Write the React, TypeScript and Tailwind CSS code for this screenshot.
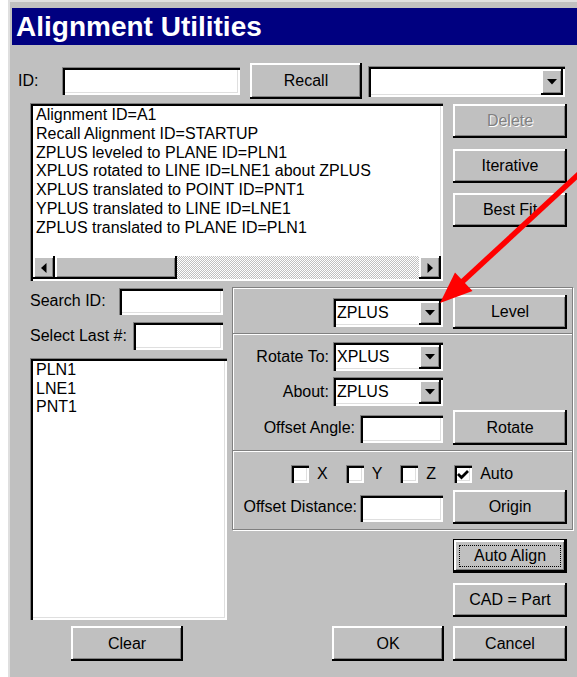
import React from "react";

// Win9x-style bevels
const RAISED =
  "bg-[#c0c0c0] shadow-[inset_-2px_-2px_0_#000,inset_2px_2px_0_#fff,inset_-3px_-3px_0_#808080]";
const SUNKEN =
  "bg-white shadow-[inset_1px_1px_0_#808080,inset_3px_3px_0_#000,inset_-2px_-2px_0_#fff,inset_-3px_-3px_0_#dfdfdf]";

function Btn({
  className = "",
  children,
  disabled = false,
}: {
  className?: string;
  children: React.ReactNode;
  disabled?: boolean;
}) {
  return (
    <div
      className={`flex shrink-0 items-center justify-center leading-none ${RAISED} ${className} ${
        disabled ? "text-[#808080] [text-shadow:1px_1px_0_#fff]" : "text-black"
      }`}
    >
      {children}
    </div>
  );
}

function DownArrow() {
  return (
    <svg width="10" height="6" viewBox="0 0 10 6">
      <path d="M0 0H10L5 5.5Z" fill="#000" />
    </svg>
  );
}

function Combo({ value = "", className = "" }: { value?: string; className?: string }) {
  return (
    <div className={`flex shrink-0 items-stretch pt-[3px] pl-[3px] pr-[2px] pb-[2px] ${SUNKEN} ${className}`}>
      <div className="flex flex-1 items-center pl-[1px] leading-none">{value}</div>
      <div className={`flex w-[22px] items-center justify-center ${RAISED}`}>
        <DownArrow />
      </div>
    </div>
  );
}

function Field({ className = "" }: { className?: string }) {
  return <div className={`shrink-0 ${SUNKEN} ${className}`} />;
}

function Check({ checked = false, label }: { checked?: boolean; label: string }) {
  return (
    <div className="flex items-center gap-[8px]">
      <div className={`flex h-[18px] w-[18px] items-center justify-center ${SUNKEN}`}>
        {checked && (
          <svg width="12" height="11" viewBox="0 0 12 11">
            <path d="M1 5L4.5 8.5L11 2" fill="none" stroke="#000" strokeWidth="2.8" />
          </svg>
        )}
      </div>
      <span className="leading-none">{label}</span>
    </div>
  );
}

function Divider() {
  return (
    <div className="flex flex-col">
      <div className="h-px bg-[#808080]" />
      <div className="h-px bg-white" />
    </div>
  );
}

const historyLines = [
  "Alignment ID=A1",
  "Recall Alignment ID=STARTUP",
  "ZPLUS leveled to PLANE ID=PLN1",
  "XPLUS rotated to LINE ID=LNE1 about ZPLUS",
  "XPLUS translated to POINT ID=PNT1",
  "YPLUS translated to LINE ID=LNE1",
  "ZPLUS translated to PLANE ID=PLN1",
];

const features = ["PLN1", "LNE1", "PNT1"];

export default function App() {
  return (
    <div className="relative flex h-[677px] w-[577px] overflow-hidden bg-white font-['Liberation_Sans',Arial,sans-serif] text-[16px] text-black">
      <div className="w-[8px] shrink-0 bg-white" />
      <div className="flex flex-1 flex-col border-l-2 border-t-2 border-[#dfdfdf] bg-[#c0c0c0] pt-[6px]">
        {/* title bar */}
        <div className="ml-[2px] flex h-[37px] items-center bg-[#000080] pl-[4px] text-[28px] font-bold leading-none text-white">
          Alignment Utilities
        </div>

        {/* ID / Recall row */}
        <div className="mt-[18px] flex h-[36px] items-center">
          <span className="ml-[8px] w-[44px] leading-none">ID:</span>
          <Field className="h-[28px] w-[178px]" />
          <Btn className="ml-[10px] h-[36px] w-[112px]">Recall</Btn>
          <Combo className="ml-[6px] h-[31px] w-[197px]" />
        </div>

        {/* history list + action buttons */}
        <div className="mt-[4px] flex">
          <div className={`ml-[20px] flex h-[178px] w-[413px] flex-col pt-[3px] pl-[3px] pr-[2px] pb-[2px] ${SUNKEN}`}>
            <div className="flex-1 overflow-hidden whitespace-nowrap pl-[3px] leading-[18.8px]">
              {historyLines.map((l) => (
                <div key={l}>{l}</div>
              ))}
            </div>
            <div className="flex h-[23px]">
              <div className={`flex w-[22px] items-center justify-center ${RAISED}`}>
                <svg width="6" height="10" viewBox="0 0 6 10">
                  <path d="M5.5 0V10L0 5Z" fill="#000" />
                </svg>
              </div>
              <div className={`w-[122px] ${RAISED}`} />
              <div className="flex-1 bg-[image:repeating-conic-gradient(#ffffff_0_25%,#c0c0c0_0_50%)] bg-[length:2px_2px]" />
              <div className={`flex w-[22px] items-center justify-center ${RAISED}`}>
                <svg width="6" height="10" viewBox="0 0 6 10">
                  <path d="M0.5 0V10L6 5Z" fill="#000" />
                </svg>
              </div>
            </div>
          </div>
          <div className="ml-[10px] flex w-[114px] flex-col pt-[1px]">
            <Btn disabled className="h-[34px] w-[114px]">
              Delete
            </Btn>
            <Btn className="mt-[11px] h-[34px] w-[114px]">Iterative</Btn>
            <Btn className="mt-[10px] h-[34px] w-[114px]">Best Fit</Btn>
          </div>
        </div>

        {/* lower area */}
        <div className="mt-[6px] flex">
          {/* feature search column */}
          <div className="ml-[20px] flex w-[197px] flex-col">
            <div className="flex h-[28px] items-center">
              <span className="leading-none">Search ID:</span>
              <Field className="ml-auto mr-[4px] mt-[1px] h-[27px] w-[104px]" />
            </div>
            <div className="mt-[7px] flex h-[28px] items-center">
              <span className="leading-none">Select Last #:</span>
              <Field className="ml-auto mr-[4px] h-[28px] w-[90px]" />
            </div>
            <div className={`mt-[8px] h-[262px] w-[197px] pt-[3px] pl-[6px] leading-[18.5px] ${SUNKEN}`}>
              {features.map((f) => (
                <div key={f}>{f}</div>
              ))}
            </div>
            <Btn className="ml-[41px] mt-[6px] h-[35px] w-[112px]">Clear</Btn>
          </div>

          {/* alignment controls column */}
          <div className="ml-[5px] flex w-[341px] flex-col">
            <div className="flex h-[243px] flex-col border border-[#808080] shadow-[inset_1px_1px_0_#fff,1px_1px_0_#fff]">
              {/* level */}
              <div className="flex h-[45px] items-start justify-end pr-[5px] pt-[7px]">
                <Combo value="ZPLUS" className="mt-[3px] h-[29px] w-[110px]" />
                <Btn className="ml-[10px] h-[34px] w-[114px]">Level</Btn>
              </div>
              <Divider />
              {/* rotate */}
              <div className="flex h-[115px] flex-col pr-[5px]">
                <div className="mt-[7px] flex items-center justify-end">
                  <span className="mr-[4px] leading-none">Rotate To:</span>
                  <Combo value="XPLUS" className="h-[29px] w-[110px]" />
                  <div className="w-[124px] shrink-0" />
                </div>
                <div className="mt-[6px] flex items-center justify-end">
                  <span className="mr-[4px] leading-none">About:</span>
                  <Combo value="ZPLUS" className="h-[29px] w-[110px]" />
                  <div className="w-[124px] shrink-0" />
                </div>
                <div className="mt-[4px] flex h-[35px] items-center justify-end">
                  <span className="mr-[5px] leading-none">Offset Angle:</span>
                  <Field className="mt-[3px] h-[28px] w-[83px]" />
                  <Btn className="ml-[10px] h-[35px] w-[114px]">Rotate</Btn>
                </div>
              </div>
              <Divider />
              {/* translate */}
              <div className="flex h-[77px] flex-col pr-[5px]">
                <div className="mt-[13px] flex h-[18px] items-center gap-[18px] pl-[58px]">
                  <Check label="X" />
                  <Check label="Y" />
                  <Check label="Z" />
                  <Check checked label="Auto" />
                </div>
                <div className="mt-[7px] flex h-[34px] items-center justify-end">
                  <span className="mr-[3px] leading-none">Offset Distance:</span>
                  <Field className="mt-[2px] h-[27px] w-[83px]" />
                  <Btn className="ml-[10px] h-[34px] w-[114px]">Origin</Btn>
                </div>
              </div>
            </div>

            <div className="mr-[6px] mt-[9px] flex h-[34px] w-[114px] self-end bg-[#c0c0c0] p-[6px] shadow-[inset_0_0_0_1px_#000,inset_-3px_-3px_0_#000,inset_3px_3px_0_#fff,inset_-4px_-4px_0_#808080]">
              <div className="flex flex-1 items-center justify-center border border-dotted border-black leading-none">
                Auto Align
              </div>
            </div>
            <Btn className="mr-[6px] mt-[10px] h-[34px] w-[114px] self-end">CAD = Part</Btn>
            <div className="mr-[6px] mt-[9px] flex justify-end gap-[9px]">
              <Btn className="h-[35px] w-[112px]">OK</Btn>
              <Btn className="h-[35px] w-[114px]">Cancel</Btn>
            </div>
          </div>
        </div>
      </div>

      {/* red callout arrow */}
      <svg className="pointer-events-none absolute left-0 top-0" width="577" height="677" viewBox="0 0 577 677">
        <line x1="592" y1="162" x2="462" y2="282" stroke="#ff0000" strokeWidth="5.5" />
        <path d="M440 303L472.5 291L455 272.5Z" fill="#ff0000" />
      </svg>
    </div>
  );
}
